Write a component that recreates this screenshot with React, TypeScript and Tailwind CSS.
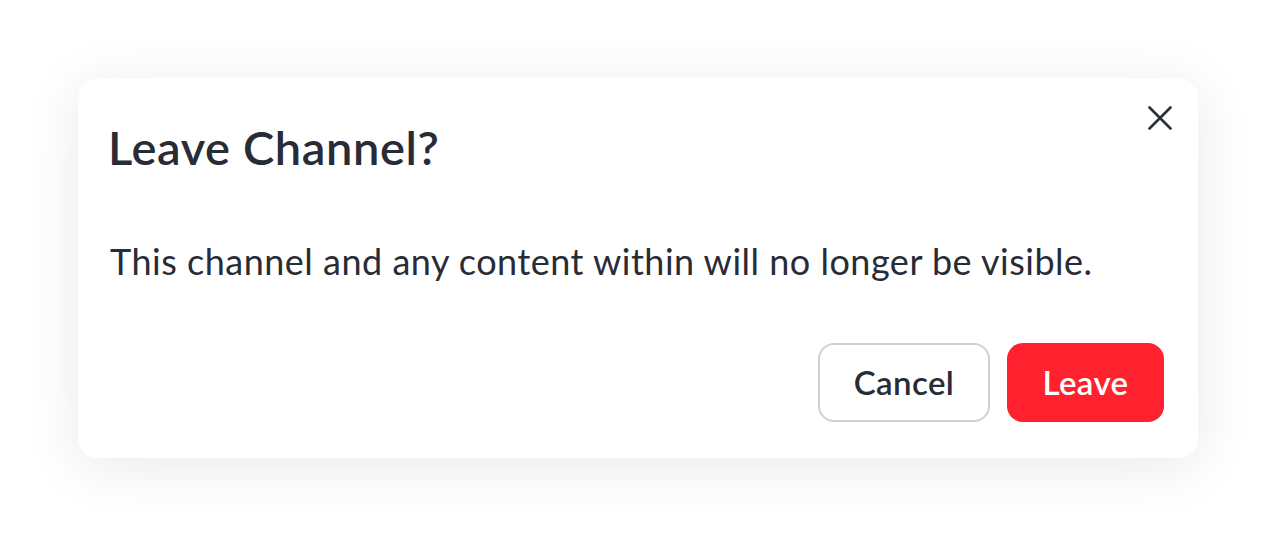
// Modal de confirmación para salir de un canal.
export default function App() {
  return (
    <div
      className="flex h-[536px] w-[1276px] items-start justify-center bg-white pt-[78px]"
      style={{ fontFamily: "Lato, 'Noto Sans', sans-serif" }}
    >
      <div className="relative flex h-[380px] w-[1120px] flex-col rounded-[20px] bg-white px-[32px] pt-[46px] pb-[36px] shadow-[0_8px_60px_rgba(0,0,0,0.09)]">
        <button className="absolute right-[26px] top-[28px] flex h-[24px] w-[24px] items-center justify-center text-[#2a2f3a]">
          <svg width="24" height="24" viewBox="0 0 24 24" fill="none" stroke="currentColor" strokeWidth="2.6" strokeLinecap="round">
            <path d="M1.5 1.5 L22.5 22.5 M22.5 1.5 L1.5 22.5" />
          </svg>
        </button>
        <h2 className="-ml-[2px] text-[47px] font-semibold leading-[47px] tracking-[0.6px] text-[#272c36]">
          Leave Channel?
        </h2>
        <p className="mt-[72px] text-[36px] leading-[36px] tracking-[0.5px] text-[#272c36]">
          This channel and any content within will no longer be visible.
        </p>
        <div className="mt-auto flex justify-end gap-[17px] pr-[2px]">
          <button className="h-[79px] w-[172px] rounded-[16px] border-2 border-[#cdd1dc] bg-white text-[33px] font-semibold tracking-[0.4px] text-[#272c36]">
            Cancel
          </button>
          <button className="h-[79px] w-[157px] rounded-[16px] bg-[#ff212d] text-[33px] font-semibold tracking-[0.4px] text-white">
            Leave
          </button>
        </div>
      </div>
    </div>
  );
}
